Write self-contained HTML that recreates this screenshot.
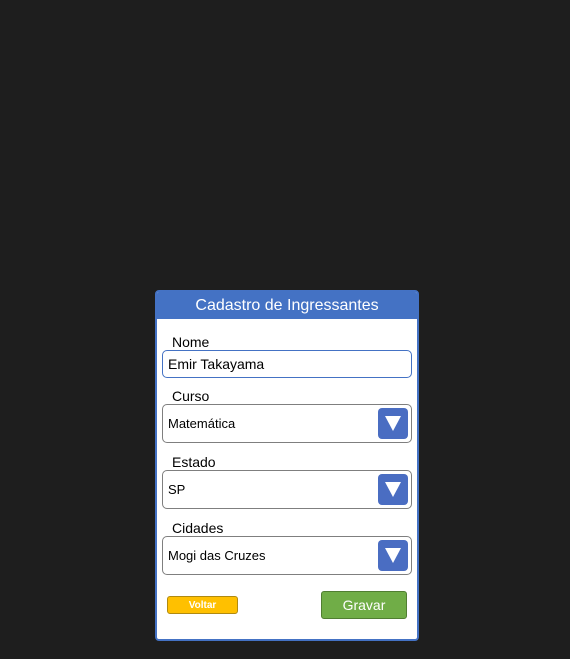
<!DOCTYPE html><html><head><style>
body{margin:0;width:570px;height:659px;background:#1e1e1e;font-family:"Liberation Sans",Arial,sans-serif;position:relative;overflow:hidden}
.p{position:absolute;left:155px;top:290px;width:260px;height:347px;background:#fff;border:2px solid #4472c4;border-radius:4px;overflow:hidden}
.h{position:absolute;left:0;top:0;width:260px;height:27px;background:#4472c4;color:#fff;font-size:16px;text-align:center;line-height:27px}
.a{position:absolute}
.l{font-size:14px;color:#000;left:15px}
.in{left:5px;width:250px;border:1px solid #7f7f7f;border-radius:5px;background:#fff;font-size:13px}
.sel{height:39px;line-height:37px;padding-left:5px;box-sizing:border-box}
.b{position:absolute;right:3px;top:3px;width:30px;height:31px;background:#4a6dc2;border-radius:4px}
.b:after{content:"";position:absolute;left:7px;top:8px;border-left:8px solid transparent;border-right:8px solid transparent;border-top:15px solid #fff}
</style></head><body>
<div class="p"><div class="h">Cadastro de Ingressantes</div>
<div class="a l" style="top:42px">Nome</div>
<div class="a in" style="top:58px;height:28px;line-height:27px;padding-left:5px;box-sizing:border-box;border-color:#4472c4;font-size:14px">Emir Takayama</div>
<div class="a l" style="top:96px">Curso</div>
<div class="a in sel" style="top:112px">Matemática<div class="b"></div></div>
<div class="a l" style="top:162px">Estado</div>
<div class="a in sel" style="top:178px">SP<div class="b"></div></div>
<div class="a l" style="top:228px">Cidades</div>
<div class="a in sel" style="top:244px">Mogi das Cruzes<div class="b"></div></div>
<div class="a" style="left:10px;top:304px;width:69px;height:16px;background:#ffc000;border:1px solid #b08a10;border-radius:3px;color:#fff;font-size:10px;font-weight:bold;text-align:center;line-height:17px">Voltar</div>
<div class="a" style="left:164px;top:299px;width:84px;height:26px;background:#70ad47;border:1px solid #507e32;border-radius:3px;color:#fff;font-size:14px;text-align:center;line-height:26px">Gravar</div>
</div>
</body></html>
